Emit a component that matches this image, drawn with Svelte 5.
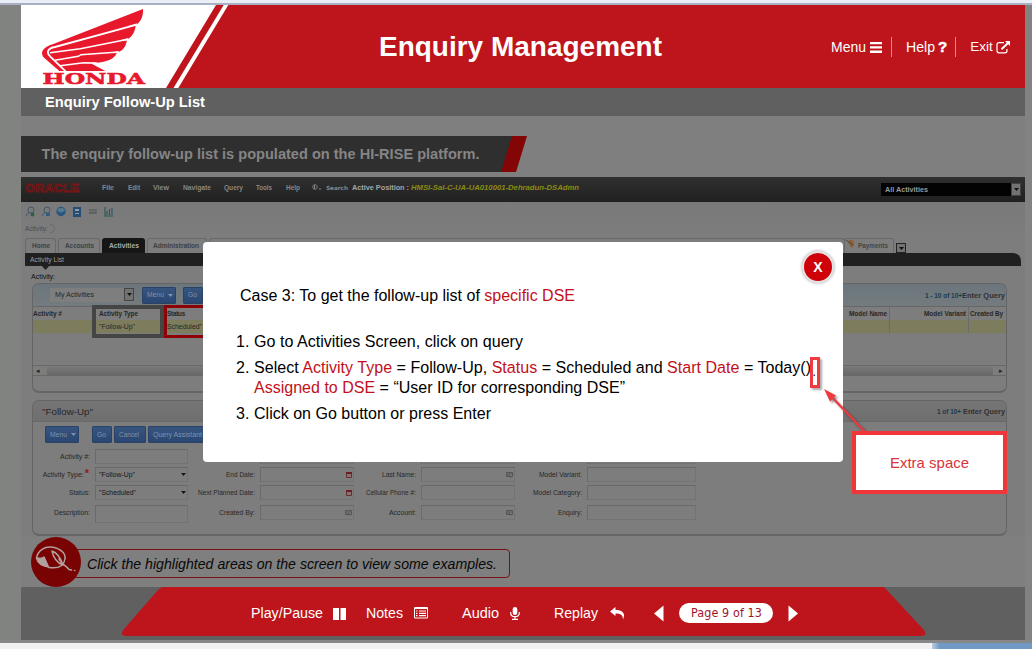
<script>
  function fit(node, width) {
    const size = parseFloat(getComputedStyle(node).fontSize);
    const ratio = width / node.getBoundingClientRect().width;
    node.style.fontSize = `${size * Math.min(1.08, Math.max(0.9, ratio))}px`;
    const natural = node.getBoundingClientRect().width;
    node.style.letterSpacing = `${(width - natural) / node.textContent.length}px`;
  }

  const menus = [
    ['File', 12], ['Edit', 12], ['View', 16], ['Navigate', 28],
    ['Query', 19], ['Tools', 16], ['Help', 14]
  ];

  const fields = [
    { l: 'Activity #:', w: 30, kind: 'plain' }, { l: '', kind: 'plain' }, { l: '', kind: 'plain' }, { l: '', kind: 'plain' },
    { l: 'Activity Type:', w: 41, kind: 'select', v: '"Follow-Up"', vw: 36, req: true }, { l: 'End Date:', w: 29, kind: 'date' },
    { l: 'Last Name:', w: 34, kind: 'pick' }, { l: 'Model Variant:', w: 43, kind: 'plain' },
    { l: 'Status:', w: 21, kind: 'select', v: '"Scheduled"', vw: 37 }, { l: 'Next Planned Date:', w: 57, kind: 'date' },
    { l: 'Cellular Phone #:', w: 50, kind: 'plain' }, { l: 'Model Category:', w: 49, kind: 'plain' },
    { l: 'Description:', w: 36, kind: 'area' }, { l: 'Created By:', w: 36, kind: 'pick' },
    { l: 'Account:', w: 27, kind: 'pick' }, { l: 'Enquiry:', w: 24, kind: 'plain' }
  ];
</script>

{#snippet caret()}
  <svg class="caret" width="5" height="3" viewBox="0 0 5 3"><path d="M0 0h5L2.5 3z" fill="currentColor" /></svg>
{/snippet}

<div class="page">
  <div class="top-edge"></div>
  <div class="stage">
    <header>
      <svg class="logo" width="210" height="83" viewBox="21 5 210 83">
        <path d="M21 5H216L166 88H21z" fill="#fff" />
        <path d="M223.7 5H228.3L178.3 88H173.5z" fill="#fff" />
        <g transform="scale(.33333)">
          <path d="M429 27L160 132C128 140 117 160 134 175L178 213H316L272 190C310 187 340 184 352 157C369 152 378 140 381 119C396 111 405 97 407 76C421 67 431 48 429 27Z" fill="#e8192c" />
          <path d="M385 78L412 70L405 78Z M360 121L386 114L379 122Z M330 158L358 153L350 160Z" fill="#fff" />
          <g fill="none" stroke="#fff" stroke-width="5.500">
            <path d="M410 74L165 141C143 144 138 158 151 170L197 214" />
            <path d="M384 118L241 146L150 158" stroke-width="4.500" />
            <path d="M356 156L243 164L235 169L165 181" stroke-width="4.500" />
            <path d="M290 189L251 188L180 197" stroke-width="4.500" />
          </g>
        </g>
        <text x="42.5" y="83.5" textLength="102.5" lengthAdjust="spacingAndGlyphs" font-family="DejaVu Serif, serif" font-weight="700" font-size="14.5" fill="#e8192c" stroke="#e8192c" stroke-width=".5">HONDA</text>
      </svg>
      <h1><span use:fit={283}>Enquiry Management</span></h1>
      <nav>
        <span class="link"><span use:fit={35}>Menu</span>
          <svg width="12" height="11" viewBox="0 0 12 11"><path d="M0 0h12v2.300H0zM0 4.300h12v2.300H0zM0 8.600h12v2.300H0z" fill="#fff" /></svg></span>
        <span class="link help"><span use:fit={29}>Help</span><b>?</b></span>
        <span class="link exit"><span use:fit={22.500}>Exit</span>
          <svg width="15" height="13" viewBox="0 0 15 13"><path d="M8 1.7H3Q1 1.7 1 3.7V9.8Q1 11.8 3 11.8H9Q11 11.8 11 9.8V8" fill="none" stroke="#fff" stroke-width="1.2" /><path d="M5.5 8.3L12 2" stroke="#fff" stroke-width="2" /><path d="M9 0h5v5z" fill="#fff" /></svg></span>
      </nav>
    </header>
    <div class="subtitle"><span use:fit={160}>Enquiry Follow-Up List</span></div>
    <div class="banner">
      <div class="banner-text"><span use:fit={438}>The enquiry follow-up list is populated on the HI-RISE platform.</span></div>
      <div class="slash"></div>
    </div>

    <div class="crm">
      <div class="oracle">
        <svg width="58" height="10" viewBox="0 0 58 10"><text x="2" y="8.6" textLength="54" lengthAdjust="spacingAndGlyphs" font-family="Liberation Sans, sans-serif" font-size="10" fill="none" stroke="#801212" stroke-width=".8">ORACLE</text></svg>
        <div class="menus">
          {#each menus as [name, w]}<div><span use:fit={w}>{name}</span></div>{/each}
        </div>
        <div class="search"><svg width="10" height="7" viewBox="0 0 10 7"><circle cx="3" cy="3" r="2.3" fill="none" stroke="#777" /><path d="M2.5 1v4M7 5h2" stroke="#888" /></svg><span use:fit={22}>Search</span></div>
        <div class="position"><span use:fit={57}>Active Position :</span><i use:fit={168}>HMSI-Sal-C-UA-UA010001-Dehradun-DSAdmn</i></div>
        <div class="scope"><span use:fit={43}>All Activities</span></div>
        <div class="drop">{@render caret()}</div>
      </div>

      <div class="tools">
        <svg width="92" height="12" viewBox="0 0 92 12">
          <g fill="none" stroke="#42566b"><circle cx="6" cy="4" r="3" /><path d="M4 6L1 10" /><circle cx="22" cy="4" r="3" /><path d="M20 6L17 10" /></g>
          <circle cx="7.5" cy="8.5" r="2" fill="#2d6040" /><path d="M21 7h4v3h-4z" fill="#315c88" />
          <circle cx="36" cy="5.5" r="4.7" fill="#28567f" /><path d="M32 4Q36 9 40 4L38 2H34z" fill="#55788f" />
          <path d="M48 1h8v10h-8z" fill="#254d75" /><path d="M50 3h4v2h-4zM50 7h4v1h-4z" fill="#8ba0ad" />
          <path d="M64 3h8v5h-8z" fill="#5e6265" /><path d="M64 5h8" stroke="#777" />
          <path d="M80 1v9h8M82 9V5M84.500 9V3M87 9V2" fill="none" stroke="#2d5a5a" stroke-width="1.2" />
        </svg>
      </div>
      <div class="crumb"><span use:fit={23}>Activity:</span><i></i></div>

      <div class="tabs">
        <div class="tab home"><span use:fit={18}>Home</span></div>
        <div class="tab accounts"><span use:fit={29}>Accounts</span></div>
        <div class="tab active"><span use:fit={30}>Activities</span></div>
        <div class="tab admin"><span use:fit={46}>Administration</span></div>
        <div class="tab rest"></div>
        <div class="tab pay"><svg width="10" height="10" viewBox="0 0 10 10"><path d="M2 2Q6-1 8 3Q9 6 6 9Q3 7 2 2z" fill="#8c603b" /><path d="M0 1l7 5" stroke="#554531" /></svg><span use:fit={30}>Payments</span></div>
        <div class="drop small">{@render caret()}</div>
      </div>
      <div class="list-bar"><span use:fit={34}>Activity List</span><i></i></div>
      <div class="list-name"><span use:fit={24}>Activity:</span></div>

      <section class="list">
        <div class="list-tools">
          <div class="view"><span use:fit={39}>My Activities</span><div class="drop">{@render caret()}</div></div>
          <div class="btn m"><span use:fit={17}>Menu</span>{@render caret()}</div>
          <div class="btn g"><span use:fit={9}>Go</span></div>
          <div class="count"><b use:fit={37}>1 - 10 of 10+</b><strong use:fit={43}>Enter Query</strong></div>
        </div>
        <div class="grid head">
          <div><span use:fit={29}>Activity #</span></div><div class="c2"><span use:fit={39}>Activity Type</span></div><div class="c3"><span use:fit={18}>Status</span></div>
          <div class="r"><span use:fit={38}>Model Name</span></div><div class="r"><span use:fit={42}>Model Variant</span></div><div class="by"><span use:fit={33}>Created By</span></div>
        </div>
        <div class="grid row">
          <div></div><div class="c2"><span use:fit={36}>"Follow-Up"</span></div><div class="c3"><span use:fit={35}>Scheduled"</span></div><div></div><div></div><div></div>
        </div>
        <div class="scroll"><span>◂</span><div></div><span>▸</span></div>
        <div class="mark gray"></div>
        <div class="mark red"></div>
      </section>

      <section class="form">
        <div class="form-title"><span use:fit={51}>"Follow-Up"</span><div class="count"><b use:fit={24}>1 of 10+</b><strong use:fit={42}>Enter Query</strong></div></div>
        <div class="buttons">
          <div class="btn b1"><span use:fit={17}>Menu</span>{@render caret()}</div>
          <div class="btn b2"><span use:fit={9}>Go</span></div>
          <div class="btn b3"><span use:fit={20}>Cancel</span></div>
          <div class="btn b4"><span use:fit={49}>Query Assistant</span></div>
        </div>
        <div class="fields">
          {#each fields as f}
            <div class="label" class:req={f.req}>{#if f.l}<span use:fit={f.w}>{f.l}</span>{/if}{#if f.req}<em>*</em>{/if}</div>
            <div class="input {f.kind}">
              {#if f.v}<span use:fit={f.vw}>{f.v}</span>{@render caret()}{/if}
              {#if f.kind === 'date'}<svg width="6" height="6" viewBox="0 0 6 6"><path d="M.5.5h5v5h-5z" fill="#8a7070" stroke="#653032" /><path d="M0 1h6" stroke="#682026" stroke-width="2" /></svg>{/if}
              {#if f.kind === 'pick'}<svg width="7" height="6" viewBox="0 0 7 6"><path d="M.5.5h6v4h-6zM2 1v3M3 2h3M3 3l2 2.500" fill="none" stroke="#4d4d4d" stroke-width=".8" /></svg>{/if}
            </div>
          {/each}
        </div>
      </section>
    </div>

    <div class="tip">
      <svg width="50" height="50" viewBox="0 0 50 50"><circle cx="25" cy="25" r="25" fill="#790203" /><g fill="none" stroke="#b3a19f" stroke-width="1.500" stroke-linejoin="round" stroke-linecap="round"><path d="M5.500 21C7 13 14 9.500 20 10C29 11 35 16 34 22C33 28 28 32 18 30.500" /><path d="M5.500 21Q10 22 13 20L17.500 30C11 29 7 27 5.500 21Z" fill="#b3a19f" /><path d="M21 14C27 16 30 22 32 28C26 26 22 20 21 14ZM28 22C31 28 35 28 38 32.500L40.500 33M43.500 33.500h.3" /></g></svg>
      <div class="tip-text"><span use:fit={410}>Click the highlighted areas on the screen to view some examples.</span></div>
    </div>

    <footer>
      <div class="controls">
        <span use:fit={72}>Play/Pause</span>
        <svg class="i1" width="13" height="12" viewBox="0 0 13 12"><path d="M0 0h6v12H0zM7.500 0h5.500v12H7.500z" fill="#fff" /></svg>
        <span use:fit={37}>Notes</span>
        <svg class="i2" width="14" height="12" viewBox="0 0 14 12"><path d="M.5.5h13v10.500H.5zM.5 1.500h13" fill="none" stroke="#fff" /><path d="M2 4h1.500M5 4h7M2 6.300h1.500M5 6.300h7M2 8.600h1.500M5 8.600h7" stroke="#fff" stroke-width="1.200" /></svg>
        <span use:fit={37}>Audio</span>
        <svg class="i3" width="10" height="13" viewBox="0 0 10 13"><rect x="2.700" width="4.600" height="8" rx="2.300" fill="#fff" /><path d="M.7 5V6Q.7 9.700 5 9.700T9.300 6V5M5 9.700V12M2 12.300h6" fill="none" stroke="#fff" stroke-width="1.200" /></svg>
        <span use:fit={44}>Replay</span>
        <svg class="i4" width="15" height="13" viewBox="0 0 15 13"><path d="M0 4.500L5.500 0V3C12 3 16 6 13 12.500C13 8 10.500 6.500 5.500 6.500V9z" fill="#fff" /></svg>
        <svg class="prev" width="10" height="17" viewBox="0 0 10 17"><path d="M9.500.5v16L0 8.500z" fill="#fff" /></svg>
        <div class="pill"><span use:fit={71}>Page 9 of 13</span></div>
        <svg class="next" width="10" height="17" viewBox="0 0 10 17"><path d="M.5.5v16L10 8.500z" fill="#fff" /></svg>
      </div>
    </footer>
  </div>
  <div class="bottom-edge"><div></div></div>

  <div class="modal">
    <div class="close">X</div>
    <p class="case"><span use:fit={335}>Case 3: To get the follow-up list of <em>specific DSE</em></span></p>
    <div class="step"><b>1.</b><div><span use:fit={269}>Go to Activities Screen, click on query</span></div></div>
    <div class="step"><b>2.</b><div><span use:fit={557}>Select <em>Activity Type</em> = Follow-Up, <em>Status</em> = Scheduled and <em>Start Date</em> = Today()</span><span use:fit={371}><em>Assigned to DSE</em> = “User ID for corresponding DSE”</span></div></div>
    <div class="step"><b>3.</b><div><span use:fit={237}>Click on Go button or press Enter</span></div></div>
  </div>

  <div class="spot"><i>.</i></div>
  <svg class="arrow" width="46" height="48" viewBox="0 0 46 48"><g filter="drop-shadow(2px 2px 1px #0006)"><path d="M7 6L43 44" stroke="#ee3a3e" stroke-width="2.300" /><path d="M2 1L14 7.500L8 13.500z" fill="#ee3a3e" /></g></svg>
  <div class="note"><span use:fit={79}>Extra space</span></div>
</div>

<style>
  :global(body) { margin: 0; overflow: hidden; background: #808180; }
  .page, .page * { box-sizing: border-box; }
  .page { position: relative; width: 1032px; height: 649px; display: flex; flex-direction: column; background: #818381; font-family: "Liberation Sans", Arial, sans-serif; overflow: hidden; }
  .page span, .page b, .page strong, .page i { white-space: nowrap; }
  svg { display: block; flex: none; }
  .top-edge { height: 5px; flex: none; background: #e9edf5; border-bottom: 2px solid #aaafc2; }
  .stage { margin: 0 7px 0 21px; height: 635px; background: #7f7f7f; display: flex; flex-direction: column; flex: none; }
  .bottom-edge { height: 9px; background: #f2f2f2; border-top: 3px solid #878887; display: flex; justify-content: flex-end; }
  .bottom-edge div { width: 100px; background: linear-gradient(90deg, #b8cce0, #7199c5 8px); }

  header { height: 83px; flex: none; background: #bd151b; color: #fff; display: flex; }
  h1 { margin: 0 0 0 148px; width: 283px; font-size: 27px; line-height: 84px; }
  nav { display: flex; margin-left: 169px; margin-top: 32px; height: 20px; font-size: 14px; line-height: 20px; }
  .link { display: flex; align-items: center; gap: 4px; height: 20px; }
  .help { margin-left: 9px; border-left: 1px solid #e6898b; padding-left: 14px; gap: 3px; }
  .help b { font-size: 15px; -webkit-text-stroke: .5px #fff; }
  .exit { margin-left: 8px; border-left: 1px solid #e6898b; padding-left: 14px; gap: 3.500px; }
  .subtitle { height: 28px; flex: none; background: #616060; padding-left: 24px; color: #fff; font: bold 14.5px/28px "Liberation Sans"; }
  .banner { margin-top: 20px; height: 36px; flex: none; display: flex; }
  .banner-text { width: 494px; padding-left: 20.5px; background: #302f30; color: #858585; font: bold 14px/36px "Liberation Sans"; clip-path: polygon(0 0, 100% 0, 482px 100%, 0 100%); }
  .slash { width: 26px; margin-left: -14px; background: #840506; clip-path: polygon(11px 0, 100% 0, 15px 100%, 0 100%); }

  .crm { margin-top: 5px; height: 360px; flex: none; font-size: 7px; color: #272727; display: flex; flex-direction: column; background: linear-gradient(#777, #7d7d7d 60px); }
  .oracle { height: 25px; flex: none; background: linear-gradient(#303030, #202020); color: #878787; font-weight: bold; display: flex; align-items: center; padding-left: 2px; padding-bottom: 4px; }
  .menus { margin-left: 21px; display: grid; grid-template-columns: 26px 25px 30px 41px 32px 30px 26px; }
  .search { display: flex; align-items: center; width: 39px; gap: 4px; font-family: "DejaVu Sans"; font-size: 6px; }
  .position { display: flex; margin-left: 1px; width: 529px; gap: 2px; font-size: 7.500px; color: #a5a5a5; }
  .position i { color: #8c8c12; }
  .scope { width: 130px; height: 13px; margin-top: 3px; background: #030303; padding-left: 4px; line-height: 14px; color: #999; }
  .drop { width: 10px; height: 13px; border: 1px solid #444; background: #727272; color: #111; display: flex; align-items: center; justify-content: center; }
  .oracle .drop { margin-top: 3px; }
  .tools { height: 20px; padding: 4px 0 0 4px; }
  .crumb { height: 13px; padding-left: 4px; color: #4c4c4c; line-height: 13px; font-size: 6px; display: flex; align-items: center; }
  .crumb i { width: 5px; height: 9px; margin-left: 2px; border: solid #6c6c6c; border-width: 1px 1px 1px 0; border-radius: 0 5px 5px 0; }
  .tabs { height: 18px; flex: none; display: flex; align-items: flex-end; padding-left: 4px; gap: 2px; font-weight: bold; }
  .tab { height: 15px; line-height: 14px; color: #404040; border: 1px solid #696969; border-bottom: 0; border-radius: 3px 3px 0 0; padding-left: 6px; }
  .home { width: 31px; }
  .accounts { width: 42px; }
  .active { width: 43px; height: 15px; background: #161616; border-color: #161616; color: #aaa; }
  .admin { width: 60px; padding-left: 5px; }
  .rest { width: 636px; }
  .pay { width: 50px; color: #454545; display: flex; gap: 2px; padding: 0 0 0 1px; margin-left: -3px; }
  .drop.small { height: 10px; border-color: #222; margin-left: 0; }
  .list-bar { height: 13px; flex: none; margin: 0 4px; background: #202020; border-radius: 0 8px 0 0; color: #9c9c9c; line-height: 13px; padding-left: 5px; display: flex; align-items: flex-end; }
  .list-bar i { width: 9px; height: 5px; margin: 0 0 -4px -23px; background: #202020; clip-path: polygon(0 0, 100% 0, 50% 100%); }
  .list-name { height: 17px; flex: none; padding: 5px 0 0 10px; line-height: 12px; font-size: 8px; color: #111; }
  section { margin-left: 11px; width: 975px; border: 1px solid #656565; border-radius: 7px; flex: none; }
  .list { position: relative; height: 110px; border-bottom-width: 2px; }
  .list-tools { height: 22px; display: flex; align-items: center; background: linear-gradient(#6b767c, #747b7f); border-radius: 7px 7px 0 0; padding-left: 17px; }
  .view { width: 84px; height: 14px; background: #7e7e7e; display: flex; justify-content: space-between; line-height: 14px; padding-left: 5px; }
  .btn { height: 17px; line-height: 16px; background: linear-gradient(#37557f, #294772); border: 1px solid #294266; border-radius: 1px; color: #7f93ad; display: flex; align-items: center; padding-left: 4px; }
  .m { margin-left: 8px; width: 34px; gap: 4px; }
  .g { margin-left: 7px; width: 20px; }
  .count { margin-left: auto; display: flex; align-items: center; color: #183b4e; font-size: 6.500px; padding-right: 1px; }
  .count strong { color: #303030; font-size: 7.500px; }
  .grid { display: grid; grid-template-columns: 60px 72px 673px 52px 79px 37px; height: 14px; line-height: 13px; }
  .grid > div { border-right: 1px solid #6b6b6b; overflow: hidden; }
  .grid > div:last-child { border: 0; }
  .head { font-weight: bold; border-top: 1px solid #666; }
  .grid .c2 { padding-left: 6px; }
  .grid .c3 { padding-left: 2px; }
  .grid .r { text-align: right; padding-right: 2px; }
  .grid .by { padding-left: 1px; }
  .row { background: #7d7c5c; height: 13px; line-height: 13px; }
  .scroll { margin-top: 32px; height: 11px; border: 1px solid #686868; border-width: 1px 0; display: flex; justify-content: space-between; align-items: center; line-height: 9px; color: #222; padding: 0 3px; }
  .scroll div { width: 946px; height: 8px; background: linear-gradient(#777, #686868); }
  .mark { position: absolute; border: 4px solid #454545; top: 21px; height: 33px; }
  .gray { left: 59px; width: 72px; }
  .red { left: 131px; width: 80px; border: 3px solid #8c0205; }
  .form { margin-top: 7px; height: 136px; border-bottom-width: 2px; }
  .form-title { display: flex; height: 21px; padding-left: 9px; line-height: 21px; border-bottom: 1px solid #696969; background: linear-gradient(#757575, #6f6f6f); border-radius: 7px 7px 0 0; font-size: 10px; }
  .form-title .count { gap: 2px; }
  .buttons { display: flex; padding: 4px 0 0 12px; height: 27px; }
  .b1 { width: 34px; gap: 4px; }
  .b2 { width: 20px; margin-left: 13px; }
  .b3 { width: 32px; margin-left: 2px; }
  .b4 { width: 70px; margin-left: 2px; }
  .fields { display: grid; grid-template-columns: 62px 93px 72px 94px 67px 94px 72px 109px; grid-template-rows: 15px 15px 15px 15px; row-gap: 3px; }
  .fields > :nth-child(n+25) { transform: translateY(2px); }
  .label { text-align: right; padding-right: 5px; line-height: 16px; }
  .label.req { padding-right: 0; }
  .label em { color: #901818; font: bold 11px/10px "Liberation Sans"; margin: 0 6px 0 1px; }
  .input { border: 1px solid #737373; border-top-color: #686868; border-left-color: #6b6b6b; display: flex; align-items: center; justify-content: flex-end; padding: 0 1px; }
  .input.select { justify-content: space-between; color: #161616; padding-left: 3px; }
  .input.area { height: 18px; }

  .tip { height: 50px; flex: none; display: flex; padding-left: 10px; }
  .tip svg { position: relative; z-index: 1; }
  .tip-text { margin: 12px 0 0 -14px; width: 443px; height: 29px; border: 1px solid #7a1014; border-radius: 0 4px 4px 0; padding-left: 19px; color: #080808; font: italic 14.500px/29px "Liberation Sans"; }
  footer { height: 53px; flex: none; background: #616060; padding-left: 100px; }
  .controls { width: 805px; height: 49px; background: #bd151b; clip-path: path("M42 0H763L803 43Q807 49 800 49H5Q-2 49 3 42L37 3Q40 0 42 0Z"); display: flex; align-items: center; padding: 3px 0 0 130px; color: #fff; font-size: 14px; }
  .i1 { margin: 1px 20px 0 10px; }
  .i2 { margin: 0 34px 0 11px; }
  .i3 { margin: 1px 34px 0 11px; }
  .i4 { margin: 0 29px 0 12px; }
  .pill { width: 94px; height: 20px; margin: 0 15px; border-radius: 10px; background: #fff; color: #a3122b; padding-left: 12px; font: 11.500px/20px "DejaVu Sans Condensed", "DejaVu Sans", sans-serif; }

  .modal { position: absolute; left: 203px; top: 242px; width: 640px; height: 220px; background: #fff; border-radius: 4px; color: #000; font-size: 16px; line-height: 20px; padding: 44px 0 0 33px; }
  .modal em { font-style: normal; color: #c2101b; }
  .case { margin: 0 0 25px 4px; height: 20px; display: flex; }
  .case span { white-space: pre; }
  .step { display: flex; margin-bottom: 6px; }
  .step div { display: flex; flex-direction: column; align-items: flex-start; }
  .step b { width: 18px; height: 20px; font-weight: normal; line-height: 22px; }
  .close { position: absolute; left: 599px; top: 9px; width: 32px; height: 32px; border: 2px solid #e9e4e4; border-radius: 50%; background: #cf0209; box-shadow: 0 0 3px #999; color: #fff; text-align: center; font: bold 14px/28px "Liberation Sans"; }
  .spot { position: absolute; left: 810px; top: 357px; width: 10px; height: 31px; border: 3px solid #ee3a40; box-shadow: 2px 2px 2px #0005; line-height: 24px; font-size: 12px; }
  .arrow { position: absolute; left: 822px; top: 388px; }
  .note { position: absolute; left: 852px; top: 431px; width: 155px; height: 63px; border: 4px solid #f1363a; background: #fff; color: #d9343c; padding-left: 34px; font-size: 15px; line-height: 56px; }
</style>
